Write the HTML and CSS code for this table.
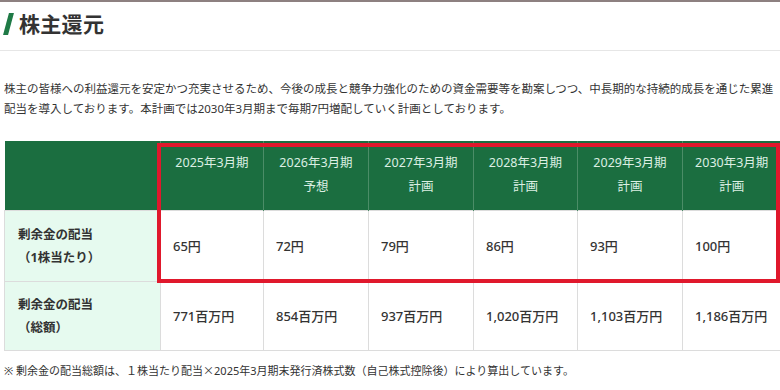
FILE: index.html
```html
<!DOCTYPE html>
<html lang="ja">
<head>
<meta charset="utf-8">
<link rel="stylesheet" href="styles.css">
</head>
<body>
<div class="topline"></div>
<header class="heading">
  <span class="slash"></span>
  <h2 class="title">株主還元</h2>
</header>
<main class="content">
  <p class="lead">株主の皆様への利益還元を安定かつ充実させるため、今後の成長と競争力強化のための資金需要等を勘案しつつ、中長期的な持続的成長を通じた累進配当を導入しております。本計画では2030年3月期まで毎期7円増配していく計画としております。</p>
  <div class="table-wrap">
    <table class="div-table">
      <colgroup>
        <col class="c-label">
        <col class="c-a"><col class="c-b"><col class="c-b"><col class="c-c"><col class="c-b"><col class="c-d">
      </colgroup>
      <thead>
        <tr>
          <th class="corner"></th>
          <th>2025年3月期</th>
          <th>2026年3月期<br>予想</th>
          <th>2027年3月期<br>計画</th>
          <th>2028年3月期<br>計画</th>
          <th>2029年3月期<br>計画</th>
          <th>2030年3月期<br>計画</th>
        </tr>
      </thead>
      <tbody>
        <tr class="r1">
          <th class="label">剰余金の配当<br>（1株当たり）</th>
          <td>65円</td><td>72円</td><td>79円</td><td>86円</td><td>93円</td><td>100円</td>
        </tr>
        <tr class="r2">
          <th class="label">剰余金の配当<br>（総額）</th>
          <td>771百万円</td><td>854百万円</td><td>937百万円</td><td>1,020百万円</td><td>1,103百万円</td><td>1,186百万円</td>
        </tr>
      </tbody>
    </table>
    <div class="highlight"></div>
  </div>
  <p class="note">※ 剰余金の配当総額は、１株当たり配当<span class="cjk">×</span>2025年3月期末発行済株式数（自己株式控除後）により算出しています。</p>
</main>
</body>
</html>
```
FILE: styles.css
```css
html, body {
  margin: 0;
  padding: 0;
  background: #ffffff;
}
body {
  width: 780px;
  overflow: hidden;
  font-family: "Noto Sans", "Noto Sans CJK JP", sans-serif;
  color: #333333;
}
.topline {
  height: 2px;
  background: #8d8080;
}
.heading {
  display: flex;
  align-items: center;
  height: 44px;
  padding: 0 0 4px 6px;
  border-bottom: 1px solid #e6e6e6;
}
.slash {
  display: block;
  width: 5px;
  height: 22px;
  background: #1f7a46;
  transform: skewX(-15deg);
}
.title {
  margin: 0 0 0 8px;
  font-size: 21px;
  font-weight: 700;
  color: #333333;
  line-height: 1;
  letter-spacing: 0.3px;
}
.content {
  padding: 0 0 0 4px;
}
.lead {
  margin: 28px 0 0;
  width: 776px;
  font-size: 11.5px;
  line-height: 19.5px;
  color: #333333;
}
.table-wrap {
  position: relative;
  margin-top: 23px;
}
.div-table {
  width: 776px;
  border-collapse: collapse;
  table-layout: fixed;
}
.c-label { width: 156px; }
.c-a { width: 103px; }
.c-b { width: 105px; }
.c-c { width: 104px; }
.c-d { width: 98px; }
.div-table thead th {
  background: #1b6e40;
  color: #dcefe3;
  font-weight: 400;
  font-size: 12.5px;
  line-height: 24px;
  height: 69px;
  padding: 10px 0 0;
  vertical-align: top;
  text-align: center;
  border-left: 1px solid #4b8d67;
  box-sizing: border-box;
}
.div-table thead th.corner {
  border-left: none;
}
.div-table tbody th.label {
  background: #e6faef;
  text-align: left;
  font-size: 12.5px;
  font-weight: 700;
  line-height: 23px;
  padding: 0 0 0 13px;
  color: #333333;
  border: 1px solid #dcdcdc;
}
.div-table tbody td {
  border: 1px solid #dcdcdc;
  padding: 0 0 0 12px;
  font-size: 13px;
  font-weight: 500;
  color: #333333;
  text-align: left;
}
.r1 th, .r1 td {
  height: 70px;
}
.r2 th, .r2 td {
  height: 68px;
}
.highlight {
  position: absolute;
  left: 153px;
  top: 2px;
  width: 623px;
  height: 140px;
  border: 4px solid #e0182c;
  box-sizing: border-box;
  pointer-events: none;
}
.note {
  margin: 10px 0 0;
  font-size: 11px;
  line-height: 18px;
  color: #333333;
}
.cjk {
  font-family: "Noto Sans CJK JP", sans-serif;
}
```
